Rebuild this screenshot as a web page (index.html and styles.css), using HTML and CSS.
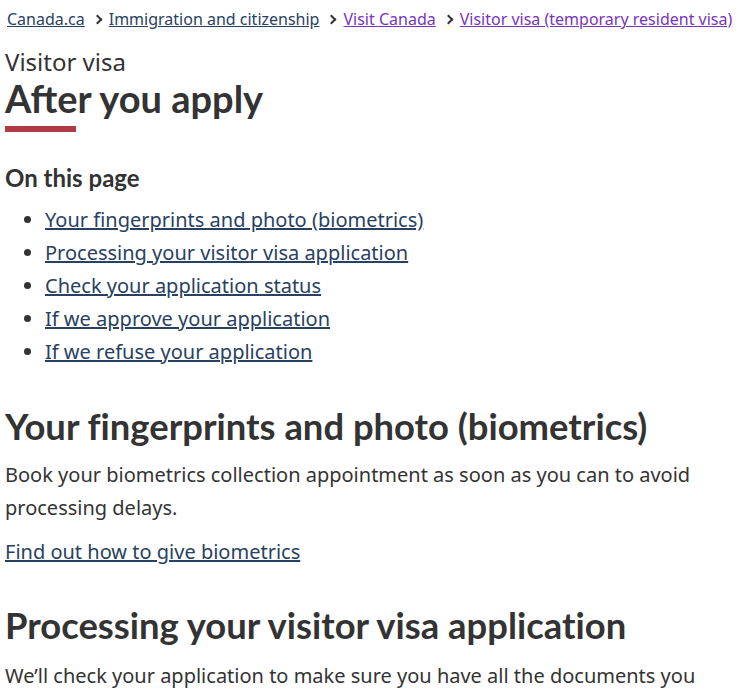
FILE: index.html
```html
<!DOCTYPE html>
<html lang="en">
<head>
    <meta charset="UTF-8">
    <meta name="viewport" content="width=device-width, initial-scale=1.0">
    <title>After you apply - Visitor visa</title>
    <link rel="stylesheet" href="styles.css">
</head>
<body>
    <nav class="breadcrumb">
        <ol>
            <li><a href="#">Canada.ca</a></li>
            <li><a href="#">Immigration and citizenship</a></li>
            <li><a class="visited" href="#">Visit Canada</a></li>
            <li><a class="visited" href="#">Visitor visa (temporary resident visa)</a></li>
        </ol>
    </nav>
    <main class="content">
        <h1 class="page-title">
            <span class="page-kicker">Visitor visa</span>
            After you apply
        </h1>

        <h2 class="toc-title">On this page</h2>
        <ul class="toc">
            <li><a href="#biometrics">Your fingerprints and photo (biometrics)</a></li>
            <li><a href="#processing">Processing your visitor visa application</a></li>
            <li><a href="#status">Check your application status</a></li>
            <li><a href="#approve">If we approve your application</a></li>
            <li><a href="#refuse">If we refuse your application</a></li>
        </ul>

        <h2 id="biometrics" class="section-title">Your fingerprints and photo (biometrics)</h2>
        <p>Book your biometrics collection appointment as soon as you can to avoid processing delays.</p>
        <p><a href="#">Find out how to give biometrics</a></p>

        <h2 id="processing" class="section-title">Processing your visitor visa application</h2>
        <p class="after-title">We’ll check your application to make sure you have all the documents you need.</p>
    </main>
</body>
</html>
```

FILE: styles.css
```css
body {
    margin: 0;
    padding: 0 5px;
    font-family: "Noto Sans", sans-serif;
    color: #333;
    background: #fff;
}

a {
    color: #284162;
}

a.visited {
    color: #7834bc;
}

.breadcrumb ol {
    display: flex;
    list-style: none;
    margin: 0;
    padding: 8px 0 0 2px;
    font-size: 16px;
    line-height: 23px;
    white-space: nowrap;
}

.breadcrumb li + li::before {
    content: "";
    display: inline-block;
    width: 5px;
    height: 5px;
    border-top: 2px solid #333;
    border-right: 2px solid #333;
    transform: rotate(45deg);
    margin: 0 8px 2px 9px;
}

.page-title {
    margin: 16px 0 0;
    font-family: Lato, sans-serif;
    font-size: 38px;
    line-height: 43px;
    font-weight: 700;
}

.page-title::after {
    content: "";
    display: block;
    width: 71px;
    height: 6px;
    margin-top: 6px;
    background: #af3c43;
}

.page-kicker {
    display: block;
    font-family: "Noto Sans", sans-serif;
    font-size: 24px;
    line-height: 30px;
    font-weight: 400;
}

.toc-title {
    margin: 32px 0 0;
    font-family: Lato, sans-serif;
    font-size: 24px;
    line-height: 28px;
}

.toc {
    margin: 11px 0 0;
    padding-left: 40px;
    font-size: 20px;
    line-height: 33px;
}

.section-title {
    margin: 36px 0 0;
    font-family: Lato, sans-serif;
    font-size: 36.4px;
    line-height: 44px;
    font-variant-ligatures: no-common-ligatures;
}

p {
    margin: 10px 0 0;
    font-size: 20px;
    line-height: 33px;
}

p + p {
    margin-top: 11px;
}

p + .section-title {
    margin-top: 35px;
}

.section-title + .after-title {
    margin-top: 12px;
}
```
